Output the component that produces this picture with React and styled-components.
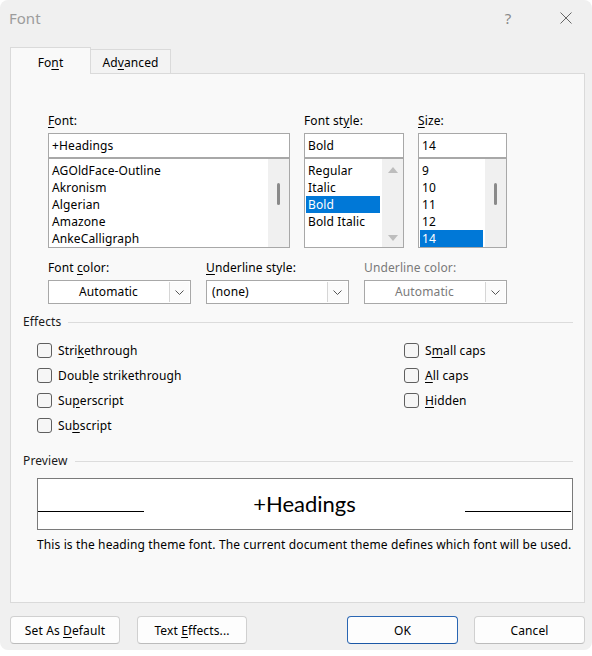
import styled, { createGlobalStyle } from "styled-components";

const GlobalStyle = createGlobalStyle`
  html, body {
    margin: 0;
    padding: 0;
    background: #ffffff;
  }
  body {
    font-family: "Noto Sans", "Open Sans", sans-serif;
    font-size: 12px;
    letter-spacing: 0.12px;
    color: #000;
  }
  * {
    box-sizing: border-box;
  }
`;

const Window = styled.div`
  width: 592px;
  height: 650px;
  background: #f0f0f0;
  border-radius: 8px;
  display: flex;
  flex-direction: column;
  overflow: hidden;
`;

const TitleBar = styled.div`
  height: 36px;
  display: flex;
  align-items: center;
  padding: 0 3px 0 9px;
`;

const Title = styled.div`
  font-size: 15px;
  color: #9c9c9c;
  letter-spacing: 0;
`;

const TitleButton = styled.div`
  width: 46px;
  height: 36px;
  display: flex;
  align-items: center;
  justify-content: center;
  color: #8a8a8a;
  font-size: 15px;
  margin-left: ${(p) => (p.$first ? "auto" : "0")};
  margin-right: ${(p) => (p.$first ? "12px" : "0")};
`;

const TabStrip = styled.div`
  display: flex;
  align-items: flex-end;
  margin: 11px 0 -1px 10px;
  height: 27px;
`;

const Tab = styled.div`
  position: relative;
  z-index: ${(p) => (p.$active ? 1 : 0)};
  width: ${(p) => p.$w}px;
  height: ${(p) => (p.$active ? 27 : 25)}px;
  display: flex;
  align-items: center;
  justify-content: center;
  background: ${(p) => (p.$active ? "#f9f9f9" : "#f3f3f3")};
  border: 1px solid #dadada;
  border-bottom: ${(p) => (p.$active ? "none" : "1px solid #dadada")};
  border-left: ${(p) => (p.$active ? "1px solid #dadada" : "none")};
  padding-top: ${(p) => (p.$active ? 3 : 1)}px;
`;

const Panel = styled.div`
  margin-left: 10px;
  width: 575px;
  height: 530px;
  background: #f9f9f9;
  border: 1px solid #dadada;
`;

const K = styled.span`
  text-decoration: underline;
  text-underline-offset: 2px;
`;

const FontGrid = styled.div`
  display: grid;
  grid-template-columns: 242px 100px 89px;
  column-gap: 14px;
  padding: 39px 0 0 37px;
`;

const Field = styled.div`
  display: flex;
  flex-direction: column;
`;

const Label = styled.div`
  line-height: 16px;
  height: 16px;
  margin-bottom: 4px;
  color: ${(p) => (p.$disabled ? "#7a7a7a" : "#000")};
`;

const TextBox = styled.div`
  height: 25px;
  border: 1px solid #a8a8a8;
  background: #fff;
  padding: 0 3px;
  line-height: 23px;
`;

const ListBox = styled.div`
  height: 90px;
  border: 1px solid #a8a8a8;
  background: #fff;
  display: flex;
`;

const Items = styled.div`
  flex: 1;
  padding: 3px 2px 0 1px;
`;

const Item = styled.div`
  height: 17px;
  line-height: 17px;
  padding-left: 2px;
  background: ${(p) => (p.$selected ? "#0078d7" : "transparent")};
  color: ${(p) => (p.$selected ? "#fff" : "#000")};
  white-space: nowrap;
`;

const Track = styled.div`
  width: 21px;
  background: #f0f0f0;
  display: flex;
  flex-direction: column;
  align-items: center;
  justify-content: ${(p) => (p.$arrows ? "space-between" : "flex-start")};
  padding: ${(p) => (p.$arrows ? "8px 0 6px" : "24px 0 0")};
`;

const Thumb = styled.div`
  width: 3px;
  height: 22px;
  border-radius: 2px;
  background: #8a8a8a;
`;

const DropGrid = styled.div`
  display: grid;
  grid-template-columns: 143px 143px 143px;
  column-gap: 15px;
  padding: 12px 0 0 37px;
`;

const Dropdown = styled.div`
  height: 24px;
  border: 1px solid #a8a8a8;
  background: #fff;
  display: flex;
`;

const DropValue = styled.div`
  flex: 1;
  line-height: 22px;
  text-align: ${(p) => (p.$left ? "left" : "center")};
  padding-left: ${(p) => (p.$left ? 5 : 0)}px;
  color: ${(p) => (p.$disabled ? "#7a7a7a" : "#000")};
`;

const DropArrow = styled.div`
  width: 20px;
  margin: 1px;
  border-left: 1px solid #d6d6d6;
  background: #fbfbfb;
  display: flex;
  align-items: center;
  justify-content: center;
`;

const SectionHeader = styled.div`
  display: flex;
  align-items: center;
  gap: 7px;
  padding: 0 11px 0 12px;
  margin-top: ${(p) => p.$mt}px;
  line-height: 16px;
  color: #1a1a1a;

  &::after {
    content: "";
    flex: 1;
    height: 1px;
    background: #dcdcdc;
  }
`;

const Effects = styled.div`
  display: flex;
  padding-left: 26px;
  margin-top: 8px;
`;

const CheckColumn = styled.div`
  display: flex;
  flex-direction: column;
  width: ${(p) => p.$w || "auto"};
`;

const CheckRow = styled.div`
  height: 25px;
  display: flex;
  align-items: center;
  gap: 6px;
`;

const Box = styled.span`
  width: 15px;
  height: 15px;
  border: 1px solid #5f5f5f;
  border-radius: 3px;
  background: #f6f6f6;
`;

const PreviewBox = styled.div`
  margin: 9px 11px 0 26px;
  height: 52px;
  border: 1px solid #7a7a7a;
  background: #fff;
  display: flex;
  align-items: baseline;
  padding: 11px 1px 0 0;
`;

const PreviewLine = styled.span`
  display: inline-block;
  width: 106px;
  height: 1px;
  background: #000;
`;

const PreviewText = styled.div`
  flex: 1;
  text-align: center;
  font-family: Lato, "Open Sans", sans-serif;
  font-size: 22px;
  line-height: 28px;
  letter-spacing: 0;
  color: #000;
`;

const Description = styled.div`
  margin-top: 7px;
  padding-left: 26px;
  line-height: 16px;
  white-space: nowrap;
`;

const Footer = styled.div`
  display: flex;
  margin-top: 13px;
  padding: 0 7px 0 10px;
`;

const Button = styled.button`
  width: ${(p) => p.$w}px;
  height: 28px;
  margin-left: ${(p) => p.$ml || "0"};
  font-family: inherit;
  font-size: 12px;
  letter-spacing: inherit;
  color: #000;
  background: #fdfdfd;
  border: 1px solid ${(p) => (p.$primary ? "#2a66b3" : "#d0d0d0")};
  border-bottom-color: ${(p) => (p.$primary ? "#1c58a6" : "#bcbcbc")};
  border-radius: 4px;
  padding: 0;
`;

const Chevron = () => (
  <svg width="9" height="5" viewBox="0 0 9 5">
    <path d="M0.5 0.5 L4.5 4.5 L8.5 0.5" fill="none" stroke="#555" strokeWidth="1" />
  </svg>
);

const Arrow = ({ up }) => (
  <svg width="10" height="6" viewBox="0 0 10 6">
    <path d={up ? "M0 6 L5 0 L10 6 Z" : "M0 0 L5 6 L10 0 Z"} fill="#bdbdbd" />
  </svg>
);

const CloseIcon = () => (
  <svg width="12" height="12" viewBox="0 0 12 12">
    <path d="M0.5 0.5 L11.5 11.5 M11.5 0.5 L0.5 11.5" stroke="#666" strokeWidth="1" />
  </svg>
);

const fonts = ["AGOldFace-Outline", "Akronism", "Algerian", "Amazone", "AnkeCalligraph"];
const styles = ["Regular", "Italic", "Bold", "Bold Italic"];
const sizes = ["9", "10", "11", "12", "14"];

const Check = ({ children }) => (
  <CheckRow>
    <Box />
    <span>{children}</span>
  </CheckRow>
);

const App = () => {
  return (
    <>
      <GlobalStyle />
      <Window>
        <TitleBar>
          <Title>Font</Title>
          <TitleButton $first>?</TitleButton>
          <TitleButton>
            <CloseIcon />
          </TitleButton>
        </TitleBar>

        <TabStrip>
          <Tab $active $w={81}>
            <span>
              Fo<K>n</K>t
            </span>
          </Tab>
          <Tab $w={80}>
            <span>
              Ad<K>v</K>anced
            </span>
          </Tab>
        </TabStrip>

        <Panel>
          <FontGrid>
            <Field>
              <Label>
                <K>F</K>ont:
              </Label>
              <TextBox>+Headings</TextBox>
              <ListBox>
                <Items>
                  {fonts.map((f) => (
                    <Item key={f}>{f}</Item>
                  ))}
                </Items>
                <Track>
                  <Thumb />
                </Track>
              </ListBox>
            </Field>
            <Field>
              <Label>
                Font st<K>y</K>le:
              </Label>
              <TextBox>Bold</TextBox>
              <ListBox>
                <Items>
                  {styles.map((s) => (
                    <Item key={s} $selected={s === "Bold"}>
                      {s}
                    </Item>
                  ))}
                </Items>
                <Track $arrows>
                  <Arrow up />
                  <Arrow />
                </Track>
              </ListBox>
            </Field>
            <Field>
              <Label>
                <K>S</K>ize:
              </Label>
              <TextBox>14</TextBox>
              <ListBox>
                <Items>
                  {sizes.map((s) => (
                    <Item key={s} $selected={s === "14"}>
                      {s}
                    </Item>
                  ))}
                </Items>
                <Track>
                  <Thumb />
                </Track>
              </ListBox>
            </Field>
          </FontGrid>

          <DropGrid>
            <Field>
              <Label>
                Font <K>c</K>olor:
              </Label>
              <Dropdown>
                <DropValue>Automatic</DropValue>
                <DropArrow>
                  <Chevron />
                </DropArrow>
              </Dropdown>
            </Field>
            <Field>
              <Label>
                <K>U</K>nderline style:
              </Label>
              <Dropdown>
                <DropValue $left>(none)</DropValue>
                <DropArrow>
                  <Chevron />
                </DropArrow>
              </Dropdown>
            </Field>
            <Field>
              <Label $disabled>Underline color:</Label>
              <Dropdown>
                <DropValue $disabled>Automatic</DropValue>
                <DropArrow>
                  <Chevron />
                </DropArrow>
              </Dropdown>
            </Field>
          </DropGrid>

          <SectionHeader $mt={10}>Effects</SectionHeader>
          <Effects>
            <CheckColumn $w="367px">
              <Check>
                Stri<K>k</K>ethrough
              </Check>
              <Check>
                Doub<K>l</K>e strikethrough
              </Check>
              <Check>
                Su<K>p</K>erscript
              </Check>
              <Check>
                Su<K>b</K>script
              </Check>
            </CheckColumn>
            <CheckColumn>
              <Check>
                S<K>m</K>all caps
              </Check>
              <Check>
                <K>A</K>ll caps
              </Check>
              <Check>
                <K>H</K>idden
              </Check>
            </CheckColumn>
          </Effects>

          <SectionHeader $mt={15}>Preview</SectionHeader>
          <PreviewBox>
            <PreviewLine />
            <PreviewText>+Headings</PreviewText>
            <PreviewLine />
          </PreviewBox>
          <Description>
            This is the heading theme font. The current document theme defines which font will be used.
          </Description>
        </Panel>

        <Footer>
          <Button $w={110}>
            Set As <K>D</K>efault
          </Button>
          <Button $w={110} $ml="17px">
            Text <K>E</K>ffects...
          </Button>
          <Button $w={111} $ml="auto" $primary>
            OK
          </Button>
          <Button $w={111} $ml="16px">
            Cancel
          </Button>
        </Footer>
      </Window>
    </>
  );
};

export default App;
